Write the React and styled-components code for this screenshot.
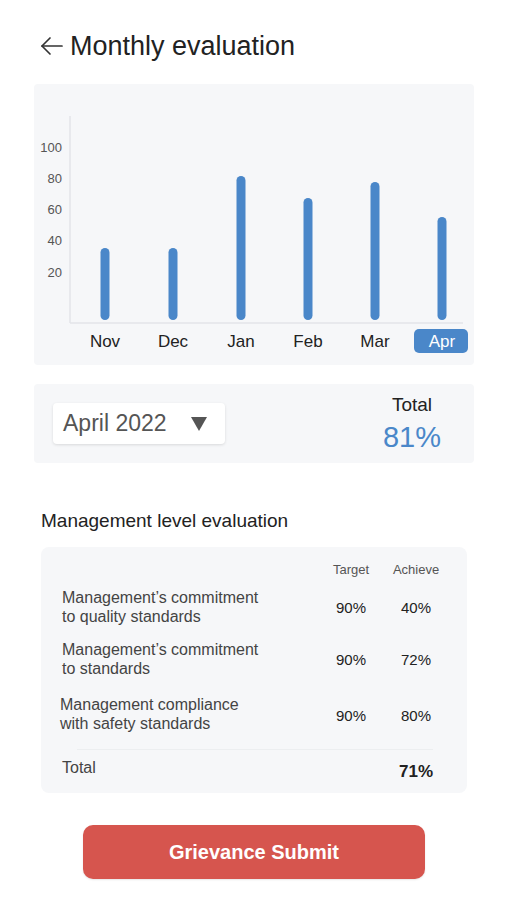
import React from "react";
import styled, { createGlobalStyle } from "styled-components";

const GlobalStyle = createGlobalStyle`
  body {
    margin: 0;
    background: #fff;
    font-family: "Liberation Sans", Arial, sans-serif;
    color: #222;
  }
`;

const Page = styled.div`
  width: 507px;
  padding: 30px 33px 20px 34px;
  box-sizing: border-box;
`;

const Header = styled.div`
  display: flex;
  align-items: center;
  height: 32px;
  gap: 6px;
  padding-left: 6px;
`;

const BackButton = styled.button`
  border: none;
  background: none;
  padding: 0;
  display: flex;
  cursor: pointer;
`;

const Title = styled.h1`
  margin: 0;
  font-size: 27px;
  font-weight: 400;
  color: #222;
  line-height: 32px;
`;

const Card = styled.div`
  background: #f6f7f9;
  border-radius: ${(p) => p.$radius || 4}px;
`;

const ChartCard = styled(Card)`
  margin-top: 22px;
  height: 281px;
`;

const FilterCard = styled(Card)`
  margin-top: 19px;
  height: 79px;
  display: flex;
  align-items: center;
  justify-content: space-between;
  padding: 0 27px 0 19px;
  box-sizing: border-box;
`;

const Dropdown = styled.div`
  width: 172px;
  height: 41px;
  background: #fff;
  border-radius: 4px;
  box-shadow: 0 1px 3px rgba(0, 0, 0, 0.12);
  display: flex;
  align-items: center;
  padding: 0 18px 0 10px;
  box-sizing: border-box;
  justify-content: space-between;
  font-size: 23px;
  color: #555;
`;

const Caret = styled.span`
  width: 0;
  height: 0;
  border-left: 8px solid transparent;
  border-right: 8px solid transparent;
  border-top: 14px solid #555;
`;

const TotalBlock = styled.div`
  width: 70px;
  display: flex;
  flex-direction: column;
  align-items: center;
`;

const TotalLabel = styled.div`
  font-size: 19px;
  line-height: 22px;
  color: #222;
`;

const TotalValue = styled.div`
  font-size: 29px;
  line-height: 34px;
  color: #4a87c9;
  margin-top: 4px;
`;

const Section = styled.div`
  padding: 0 7px;
`;

const SectionTitle = styled.h2`
  margin: 47px 0 0;
  font-size: 19px;
  line-height: 22px;
  font-weight: 400;
  color: #222;
`;

const TableCard = styled(Card)`
  margin-top: 15px;
  height: 246px;
  padding: 15px 18px 0 21px;
  box-sizing: border-box;
`;

const Row = styled.div`
  display: grid;
  grid-template-columns: 1fr 64px 66px;
  align-items: ${(p) => p.$align || "center"};
  padding: ${(p) => p.$pad || "7px 0"};
`;

const HeadCell = styled.div`
  font-size: 13px;
  line-height: 16px;
  color: #555;
  text-align: center;
`;

const Label = styled.div`
  font-size: 16px;
  line-height: 19px;
  color: #444;
  margin-left: ${(p) => p.$shift || 0}px;
  margin-top: ${(p) => p.$drop || 0}px;
`;

const Value = styled.div`
  color: #222;
  text-align: center;
  font-weight: ${(p) => (p.$bold ? 700 : 400)};
  font-size: ${(p) => (p.$bold ? 17 : 15)}px;
  margin-top: ${(p) => p.$drop || 0}px;
`;

const Divider = styled.div`
  height: 1px;
  background: #eceef0;
  margin: 9px 16px 0 15px;
`;

const SubmitButton = styled.button`
  display: block;
  margin: 32px auto 0;
  width: 342px;
  height: 54px;
  border: none;
  border-radius: 10px;
  background: #d6554e;
  color: #fff;
  font-family: "Liberation Sans", Arial, sans-serif;
  font-size: 20px;
  font-weight: 700;
  box-shadow: 0 1px 2px rgba(0, 0, 0, 0.1);
  cursor: pointer;
`;

const months = [
  { m: "Nov", x: 71, top: 164 },
  { m: "Dec", x: 139, top: 164 },
  { m: "Jan", x: 207, top: 92 },
  { m: "Feb", x: 274, top: 114 },
  { m: "Mar", x: 341, top: 98 },
  { m: "Apr", x: 408, top: 133, active: true },
];

const ticks = [
  { v: 100, y: 63 },
  { v: 80, y: 94 },
  { v: 60, y: 125 },
  { v: 40, y: 156 },
  { v: 20, y: 188 },
];

const rows = [
  { lines: ["Management’s commitment", "to quality standards"], t: "90%", a: "40%" },
  { lines: ["Management’s commitment", "to standards"], t: "90%", a: "72%" },
  { lines: ["Management compliance", "with safety standards"], t: "90%", a: "80%", shift: -2, drop: 3 },
];

function Chart() {
  return (
    <svg width="440" height="281" viewBox="0 0 440 281" fontFamily="Liberation Sans, Arial, sans-serif">
      <line x1="36" y1="32" x2="36" y2="239" stroke="#e3e5e8" strokeWidth="1.5" />
      <line x1="36" y1="239" x2="429" y2="239" stroke="#e3e5e8" strokeWidth="1.5" />
      {ticks.map((t) => (
        <text key={t.v} x="28" y={t.y + 4.5} textAnchor="end" fontSize="13" fill="#555">
          {t.v}
        </text>
      ))}
      {months.map((b) => (
        <g key={b.m}>
          <rect x={b.x - 4.5} y={b.top} width="9" height={236 - b.top} rx="4.5" fill="#4a87c9" />
          {b.active && <rect x="380" y="245" width="54" height="24" rx="5" fill="#4a87c9" />}
          <text x={b.x} y="263" textAnchor="middle" fontSize="17" fill={b.active ? "#fff" : "#222"}>
            {b.m}
          </text>
        </g>
      ))}
    </svg>
  );
}

export default function App() {
  return (
    <>
      <GlobalStyle />
      <Page>
        <Header>
          <BackButton aria-label="Back">
            <svg width="24" height="22" viewBox="0 0 24 22" fill="none" stroke="#333" strokeWidth="1.7" strokeLinecap="round" strokeLinejoin="round">
              <path d="M22 11H2" />
              <path d="M10 3L2 11l8 8" />
            </svg>
          </BackButton>
          <Title>Monthly evaluation</Title>
        </Header>

        <ChartCard>
          <Chart />
        </ChartCard>

        <FilterCard>
          <Dropdown>
            <span>April 2022</span>
            <Caret />
          </Dropdown>
          <TotalBlock>
            <TotalLabel>Total</TotalLabel>
            <TotalValue>81%</TotalValue>
          </TotalBlock>
        </FilterCard>

        <Section>
          <SectionTitle>Management level evaluation</SectionTitle>
          <TableCard $radius={8}>
            <Row $pad="0 0 3px">
              <div />
              <HeadCell>Target</HeadCell>
              <HeadCell>Achieve</HeadCell>
            </Row>
            {rows.map((r) => (
              <Row key={r.lines.join()}>
                <Label $shift={r.shift} $drop={r.drop}>
                  {r.lines[0]}
                  <br />
                  {r.lines[1]}
                </Label>
                <Value $drop={r.drop ? r.drop + 3 : 0}>{r.t}</Value>
                <Value $drop={r.drop ? r.drop + 3 : 0}>{r.a}</Value>
              </Row>
            ))}
            <Divider />
            <Row $pad="8px 0 0" $align="start">
              <Label>Total</Label>
              <div />
              <Value $bold $drop={4}>71%</Value>
            </Row>
          </TableCard>
        </Section>

        <SubmitButton>Grievance Submit</SubmitButton>
      </Page>
    </>
  );
}
